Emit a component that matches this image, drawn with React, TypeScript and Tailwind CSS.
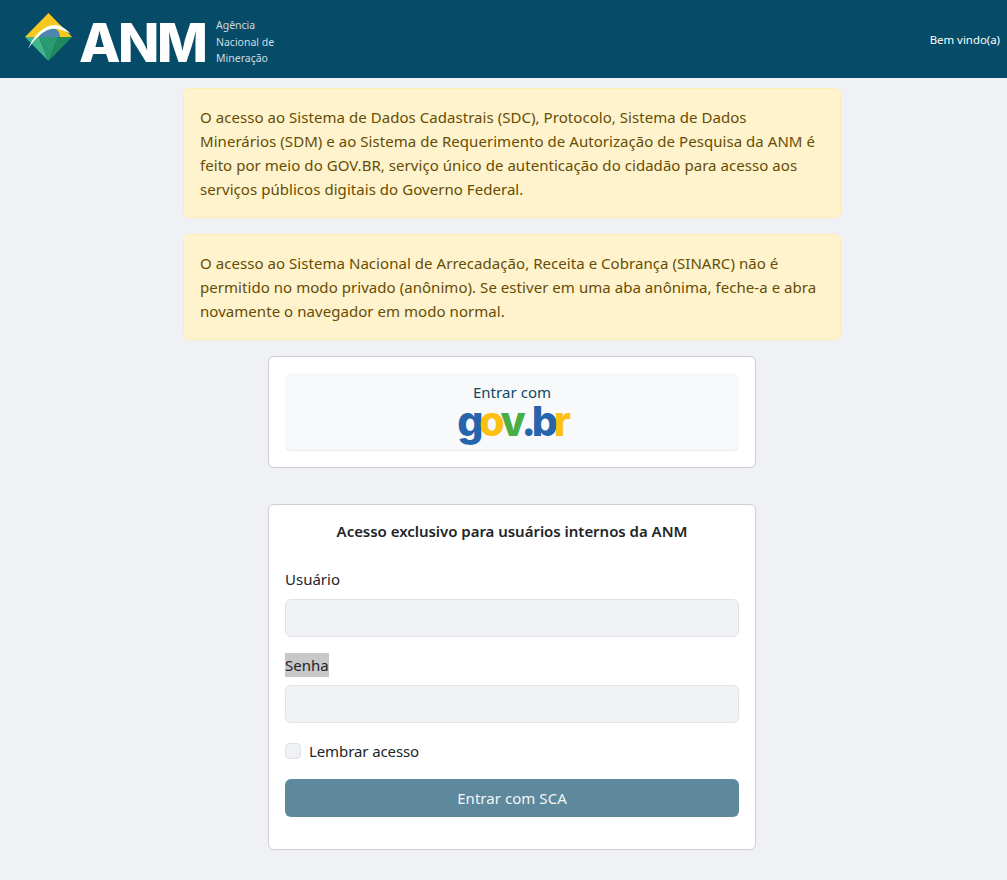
const font = { fontFamily: '"Noto Sans", "Open Sans", sans-serif', fontSize: "15px", letterSpacing: "0.05px" };

function Logo() {
  return (
    <div className="flex items-start pt-[13px]">
      <svg width="50" height="50" viewBox="0 0 50 50" className="ml-[24px]">
        <polygon points="24.5,0 48,24 1,24" fill="#f7c81e" />
        <polygon points="1,24 15,24 24.5,48" fill="#43b78a" />
        <polygon points="15,24 34,24 24.5,48" fill="#2a9a72" />
        <polygon points="34,24 48,24 24.5,48" fill="#1f8a5c" />
        <path d="M15 24 C16 17 22 13 27 14 C33 15 36 19 36 24 Z" fill="#4f86b0" />
        <path d="M4 36 C10 22 20 12 31 12 C37 12 42 16 47 21 C40 17 33 15 27 16 C18 18 10 27 4 36 Z" fill="#ffffff" />
      </svg>
      <span className="ml-[5px] mt-[1px] w-[128px] text-[54px] leading-[58px] font-extrabold tracking-[-2.5px] text-white" style={{ fontFamily: 'Inter, sans-serif' }}>
        ANM
      </span>
      <div className="ml-[9px] mt-[4px] w-[62px] text-[10.5px] leading-[16.5px] tracking-normal text-[#cfdbe2]">
        <div>Agência</div>
        <div className="whitespace-nowrap">Nacional de</div>
        <div>Mineração</div>
      </div>
    </div>
  );
}

function Alert({ children }: { children: React.ReactNode }) {
  return (
    <div className="w-[658px] rounded-md border border-[#ffecb5] bg-[#fff3cd] p-4 text-[#664d03]">
      {children}
    </div>
  );
}

export default function App() {
  return (
    <div className="min-h-[880px] bg-[#f0f1f5] leading-6 text-[#212529]" style={font}>
      <header className="flex h-[78px] items-start justify-between bg-[#064c68] pr-[7px]">
        <Logo />
        <span className="mt-[28px] text-[11.4px] tracking-normal text-white">Bem vindo(a)</span>
      </header>
      <main className="flex flex-col items-center pl-[17px] pt-[10px]">
        <div className="flex flex-col gap-4">
          <Alert>
            O acesso ao Sistema de Dados Cadastrais (SDC), Protocolo, Sistema de Dados Minerários (SDM) e ao Sistema de Requerimento de Autorização de Pesquisa da ANM é feito por meio do GOV.BR, serviço único de autenticação do cidadão para acesso aos serviços públicos digitais do Governo Federal.
          </Alert>
          <Alert>
            O acesso ao Sistema Nacional de Arrecadação, Receita e Cobrança (SINARC) não é permitido no modo privado (anônimo). Se estiver em uma aba anônima, feche-a e abra novamente o navegador em modo normal.
          </Alert>
        </div>
        <section className="mt-4 w-[488px] rounded-md border border-[#ced0d4] bg-white p-4">
          <div className="flex h-[78px] flex-col items-center rounded-md border-b border-[#e9ebee] bg-[#f8f9fa] pt-[7px] text-[#0c4a63]">
            <span>Entrar com</span>
            <span className="flex h-[34px] text-[41px] leading-[34px] font-extrabold tracking-[-4.2px]" style={{ fontFamily: 'Inter, sans-serif' }}>
              <span className="inline-block h-[34px] text-[#2764ae]">g</span>
              <span className="inline-block h-[34px] text-[#fdc010]">o</span>
              <span className="inline-block h-[34px] text-[#4aae44]">v</span>
              <span className="inline-block h-[34px] text-[#2764ae]">.b</span>
              <span className="inline-block h-[34px] text-[#fdc010]">r</span>
            </span>
          </div>
        </section>
        <section className="mt-9 h-[346px] w-[488px] rounded-md border border-[#ced0d4] bg-white px-4 pt-[14px]">
          <h2 className="text-center font-semibold tracking-[-0.03px]">Acesso exclusivo para usuários internos da ANM</h2>
          <div className="mt-6 tracking-normal">Usuário</div>
          <div className="mt-2 h-[38px] rounded-md border border-[#dee2e6] bg-[#f0f1f5]" />
          <div className="mt-4 w-fit bg-[#c8c8c8] tracking-normal">Senha</div>
          <div className="mt-2 h-[38px] rounded-md border border-[#dee2e6] bg-[#f0f1f5]" />
          <div className="mt-4 flex items-center">
            <span className="h-4 w-4 rounded-[4px] border border-[#dee2e6] bg-[#f0f1f5]" />
            <span className="ml-2 tracking-[-0.1px]">Lembrar acesso</span>
          </div>
          <button className="mt-4 h-[38px] w-full rounded-md bg-[#5e889c] text-[#f4f6f8]">Entrar com SCA</button>
        </section>
      </main>
    </div>
  );
}
